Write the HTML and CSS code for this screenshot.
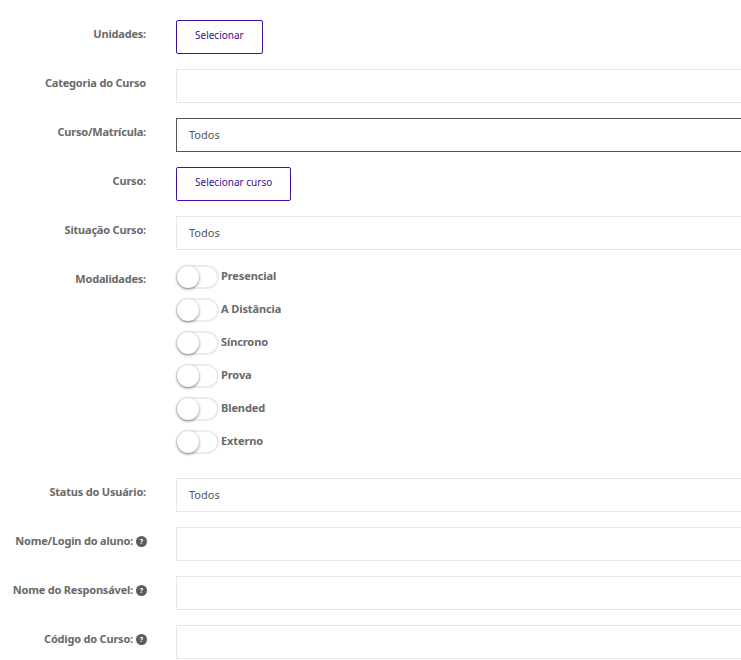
FILE: index.html
```html
<!DOCTYPE html>
<html lang="pt-BR">
<head>
    <meta charset="UTF-8">
    <meta name="viewport" content="width=device-width, initial-scale=1.0">
    <title>Filtros</title>
    <link rel="stylesheet" href="styles.css">
</head>
<body>
    <form class="filter-form">
        <div class="form-row">
            <label class="form-label">Unidades:</label>
            <button type="button" class="btn-select">Selecionar</button>
        </div>
        <div class="form-row">
            <label class="form-label">Categoria do Curso</label>
            <div class="field"></div>
        </div>
        <div class="form-row">
            <label class="form-label">Curso/Matrícula:</label>
            <div class="field focused">Todos</div>
        </div>
        <div class="form-row">
            <label class="form-label">Curso:</label>
            <button type="button" class="btn-select">Selecionar curso</button>
        </div>
        <div class="form-row">
            <label class="form-label">Situação Curso:</label>
            <div class="field">Todos</div>
        </div>
        <div class="form-row modalities">
            <label class="form-label">Modalidades:</label>
            <div class="switch-list">
                <div class="switch-item"><span class="switch"></span><span class="switch-label">Presencial</span></div>
                <div class="switch-item"><span class="switch"></span><span class="switch-label">A Distância</span></div>
                <div class="switch-item"><span class="switch"></span><span class="switch-label">Síncrono</span></div>
                <div class="switch-item"><span class="switch"></span><span class="switch-label">Prova</span></div>
                <div class="switch-item"><span class="switch"></span><span class="switch-label">Blended</span></div>
                <div class="switch-item"><span class="switch"></span><span class="switch-label">Externo</span></div>
            </div>
        </div>
        <div class="form-row">
            <label class="form-label">Status do Usuário:</label>
            <div class="field">Todos</div>
        </div>
        <div class="form-row">
            <label class="form-label">Nome/Login do aluno:<span class="help">?</span></label>
            <div class="field"></div>
        </div>
        <div class="form-row">
            <label class="form-label">Nome do Responsável:<span class="help">?</span></label>
            <div class="field"></div>
        </div>
        <div class="form-row">
            <label class="form-label">Código do Curso:<span class="help">?</span></label>
            <div class="field"></div>
        </div>
    </form>
</body>
</html>
```

FILE: styles.css
```css
html, body {
    overflow: hidden;
}
body {
    font-family: "Noto Sans", Arial, sans-serif;
    background-color: #fff;
    margin: 0;
    padding: 20px 0 0;
    height: 640px;
}
.filter-form {
    display: flex;
    flex-direction: column;
    gap: 15px;
}
.form-row {
    display: flex;
    align-items: flex-start;
    gap: 30px;
}
.form-label {
    width: 146px;
    flex-shrink: 0;
    display: flex;
    justify-content: flex-end;
    align-items: center;
    gap: 3px;
    padding-top: 6px;
    font-size: 11px;
    line-height: 16px;
    font-weight: 700;
    letter-spacing: -0.2px;
    color: #696969;
    white-space: nowrap;
}
.help {
    width: 11px;
    height: 11px;
    margin-right: -1px;
    border-radius: 50%;
    background-color: #5c5c5c;
    color: #fff;
    font-size: 7px;
    line-height: 11px;
    text-align: center;
    letter-spacing: 0;
}
.field {
    flex: 1;
    height: 34px;
    box-sizing: border-box;
    padding: 0 12px;
    border: 1px solid #e8e8e8;
    border-right: 0;
    font-size: 11px;
    line-height: 32px;
    color: #555;
    background-color: #fff;
}
.field.focused {
    border-color: #555;
}
.btn-select {
    height: 34px;
    padding: 0 18px 4px;
    border: 1px solid #42109f;
    border-radius: 2px;
    background-color: #fff;
    color: #3c0e96;
    font-family: inherit;
    font-size: 10px;
}
.modalities {
    margin-bottom: 9px;
}
.switch-list {
    display: flex;
    flex-direction: column;
    gap: 9px;
}
.switch-item {
    display: flex;
    align-items: flex-start;
    gap: 2px;
    height: 24px;
}
.switch {
    position: relative;
    width: 43px;
    height: 24px;
    box-sizing: border-box;
    border: 2px solid #ececec;
    border-radius: 12px;
    background-color: #fff;
}
.switch::before {
    content: "";
    position: absolute;
    left: -1px;
    top: -1px;
    width: 22px;
    height: 22px;
    border-radius: 50%;
    background-color: #fff;
    box-shadow: 0 1px 3px rgba(0, 0, 0, 0.5);
}
.switch-label {
    font-size: 11px;
    line-height: 16px;
    font-weight: 700;
    letter-spacing: -0.1px;
    color: #696969;
    margin-top: 3px;
}
```
